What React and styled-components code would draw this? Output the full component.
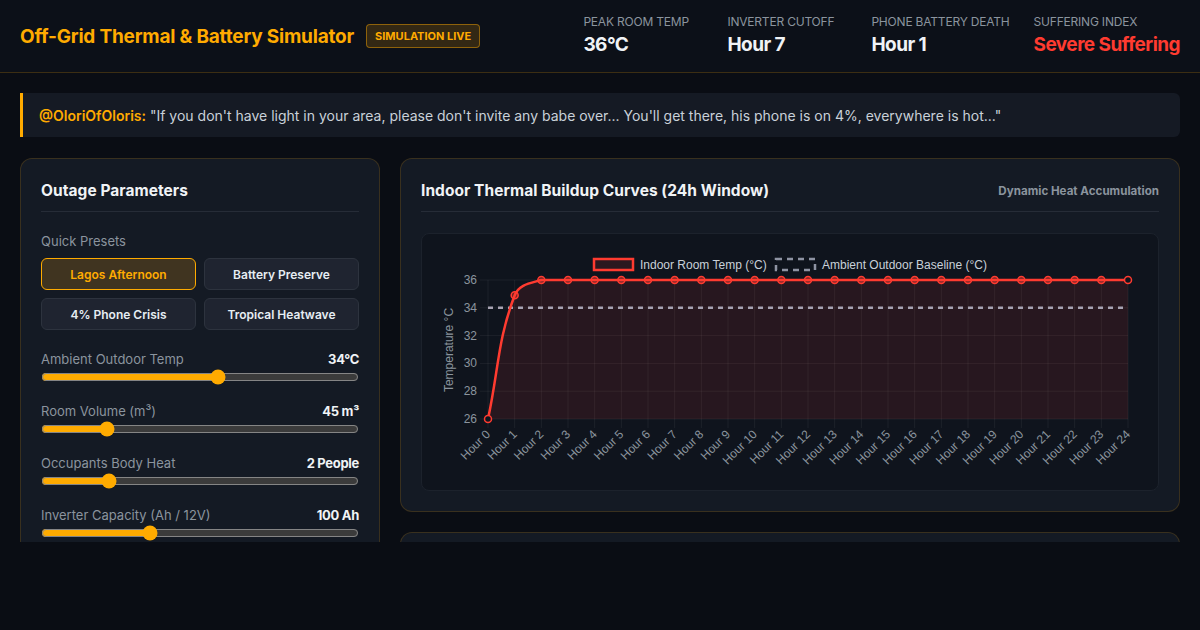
import React from 'react';
import styled, { createGlobalStyle } from 'styled-components';

const amber = '#ffab00';
const red = '#ff3b30';
const muted = '#8b949e';
const headFont = `'Inter', 'DejaVu Sans', sans-serif`;

const GlobalStyle = createGlobalStyle`
  html, body {
    margin: 0;
    padding: 0;
    background: #0a0d14;
    color: #e6edf3;
    font-family: 'Inter', 'Liberation Sans', sans-serif;
  }
  * { box-sizing: border-box; }
`;

const Header = styled.header`
  height: 73px;
  display: flex;
  align-items: center;
  justify-content: space-between;
  padding: 0 20px;
  background: #0c1018;
  border-bottom: 1px solid rgba(255, 171, 0, 0.2);
`;

const Brand = styled.div`
  display: flex;
  align-items: center;
  gap: 12px;
`;

const Title = styled.h1`
  margin: 0;
  font-family: ${headFont};
  font-size: 19px;
  font-weight: 700;
  letter-spacing: -0.2px;
  color: ${amber};
`;

const Badge = styled.span`
  display: inline-flex;
  align-items: center;
  height: 24px;
  padding: 0 8px;
  border-radius: 4px;
  border: 1px solid rgba(255, 171, 0, 0.45);
  background: rgba(255, 171, 0, 0.16);
  color: ${amber};
  font-size: 11px;
  font-weight: 700;
  text-transform: uppercase;
`;

const Stats = styled.div`
  display: flex;
  gap: 24px;
  padding-bottom: 3px;
`;

const Stat = styled.div`
  min-width: 120px;
  display: flex;
  flex-direction: column;
  gap: 4px;
`;

const StatLabel = styled.div`
  font-size: 12px;
  letter-spacing: -0.2px;
  color: ${muted};
  text-transform: uppercase;
`;

const StatValue = styled.div`
  font-family: ${headFont};
  font-size: 19px;
  font-weight: 700;
  letter-spacing: -0.55px;
  color: ${(p) => (p.$danger ? red : '#f0f3f6')};
`;

const Main = styled.main`
  height: 469px;
  overflow: hidden;
  padding: 20px 20px 0;
  display: flex;
  flex-direction: column;
  gap: 21px;
`;

const Quote = styled.blockquote`
  flex-shrink: 0;
  margin: 0;
  height: 44px;
  display: flex;
  align-items: center;
  padding: 0 16px;
  background: #151a24;
  border-left: 3px solid ${amber};
  border-radius: 0 6px 6px 0;
  font-size: 14px;
  color: #c9d1d9;
`;

const Handle = styled.strong`
  font-family: ${headFont};
  font-weight: 600;
  color: ${amber};
  margin-right: 4px;
`;

const Layout = styled.div`
  flex-shrink: 0;
  display: grid;
  grid-template-columns: 360px 1fr;
  gap: 20px;
  align-items: start;
`;

const Card = styled.section`
  background: #141a24;
  border: 1px solid rgba(255, 171, 0, 0.16);
  border-radius: 12px;
  padding: 20px;
  min-height: ${(p) => p.$minHeight || 0}px;
`;

const Column = styled.div`
  display: flex;
  flex-direction: column;
  gap: 20px;
`;

const CardHead = styled.div`
  display: flex;
  align-items: center;
  justify-content: space-between;
  height: 33px;
  padding-bottom: 9px;
  border-bottom: 1px solid #262c37;
  margin-bottom: 21px;
`;

const CardTitle = styled.h2`
  margin: 0;
  font-family: ${headFont};
  font-size: 15.5px;
  font-weight: 700;
  letter-spacing: 0.05px;
  color: #f0f3f6;
`;

const CardNote = styled.span`
  font-family: ${headFont};
  font-size: 11.6px;
  font-weight: 700;
  color: ${muted};
`;

const SubLabel = styled.div`
  font-size: 13px;
  color: ${muted};
  margin-bottom: 9px;
`;

const PresetGrid = styled.div`
  display: grid;
  grid-template-columns: 1fr 1fr;
  gap: 8px;
  margin-bottom: 21px;
`;

const Preset = styled.button`
  height: 32px;
  border-radius: 6px;
  font-family: 'Inter', sans-serif;
  font-size: 12px;
  font-weight: 600;
  cursor: pointer;
  border: 1px solid ${(p) => (p.$active ? amber : '#2d333e')};
  background: ${(p) => (p.$active ? '#403420' : '#1f2430')};
  color: ${(p) => (p.$active ? amber : '#e6edf3')};
`;

const Field = styled.div`
  margin-bottom: 18px;
`;

const FieldRow = styled.div`
  display: flex;
  justify-content: space-between;
  align-items: center;
  font-size: 13px;
  margin-bottom: 2px;
`;

const FieldName = styled.span`
  color: ${muted};
`;

const FieldValue = styled.span`
  font-family: ${headFont};
  font-weight: 700;
  letter-spacing: -0.3px;
  color: #f0f3f6;
`;

const Range = styled.input`
  display: block;
  width: 100%;
  margin: 0;
  height: 16px;
  accent-color: ${amber};
  color-scheme: dark;
`;

const ChartBox = styled.div`
  height: 258px;
  background: #0f141d;
  border: 1px solid #1c222c;
  border-radius: 8px;
  overflow: hidden;
`;

const presets = ['Lagos Afternoon', 'Battery Preserve', '4% Phone Crisis', 'Tropical Heatwave'];

const fields = [
  { name: 'Ambient Outdoor Temp', value: '34°C', min: 20, max: 45, v: 34 },
  { name: 'Room Volume (m³)', value: '45 m³', min: 20, max: 150, v: 45 },
  { name: 'Occupants Body Heat', value: '2 People', min: 1, max: 6, v: 2 },
  { name: 'Inverter Capacity (Ah / 12V)', value: '100 Ah', min: 50, max: 200, v: 100 },
];

const hours = Array.from({ length: 25 }, (_, i) => i);
const temps = hours.map((h) => (h === 0 ? 26 : h === 1 ? 34.9 : 36));

const X0 = 66;
const X1 = 706;
const xAt = (h) => X0 + ((X1 - X0) * h) / 24;
const yAt = (t) => 185 - ((t - 26) * (185 - 46)) / 10;

// spline through hour 0..2, flat after that
const curve = `M66,185 C76.7,135.5 75.5,106.1 92.7,61.3 C96.8,50.5 107.9,49.3 119.3,46 L706,46`;

const ThermalChart = () => {
  const axis = { fontFamily: 'Liberation Sans, Arial, sans-serif', fontSize: 12, fill: muted };
  return (
    <svg width="735" height="256" viewBox="0 0 735 256">
      <g>
        <rect x="172" y="25" width="39" height="11" fill="rgba(255,59,48,0.12)" stroke={red} strokeWidth="2.5" />
        <text x="218" y="35" {...axis} fill="#c9d1d9">Indoor Room Temp (°C)</text>
        <rect x="354" y="25" width="39" height="11" fill="none" stroke="#8e93a3" strokeWidth="2.5" strokeDasharray="6 5" />
        <text x="400" y="35" {...axis} fill="#c9d1d9">Ambient Outdoor Baseline (°C)</text>
      </g>
      {[26, 28, 30, 32, 34, 36].map((t) => (
        <g key={t}>
          <line x1="58" x2={X1} y1={yAt(t)} y2={yAt(t)} stroke="rgba(255,255,255,0.06)" />
          <text x="55" y={yAt(t) + 4} textAnchor="end" {...axis}>{t}</text>
        </g>
      ))}
      {hours.map((h) => (
        <g key={h}>
          <line x1={xAt(h)} x2={xAt(h)} y1="46" y2="194" stroke="rgba(255,255,255,0.06)" />
          <text
            x={xAt(h) + 3}
            y="201"
            textAnchor="end"
            transform={`rotate(-45 ${xAt(h) + 3} 201)`}
            {...axis}
          >
            Hour {h}
          </text>
        </g>
      ))}
      <text x="31" y="116" textAnchor="middle" transform="rotate(-90 31 116)" {...axis}>
        Temperature °C
      </text>
      <path d={`${curve} L706,185 L66,185 Z`} fill="rgba(255,59,48,0.1)" />
      <line x1={X0} x2={X1} y1={yAt(34)} y2={yAt(34)} stroke="#a7a3b3" strokeWidth="2.5" strokeDasharray="5 5" />
      <path d={curve} fill="none" stroke={red} strokeWidth="2.5" />
      {hours.map((h) => (
        <circle
          key={h}
          cx={xAt(h)}
          cy={yAt(temps[h])}
          r="3.5"
          fill={h === 0 || h === 24 ? '#0f141d' : 'rgba(255,59,48,0.4)'}
          stroke={red}
          strokeWidth="1.5"
        />
      ))}
    </svg>
  );
};

const App = () => (
  <>
    <GlobalStyle />
    <Header>
      <Brand>
        <Title>Off-Grid Thermal &amp; Battery Simulator</Title>
        <Badge>Simulation Live</Badge>
      </Brand>
      <Stats>
        <Stat>
          <StatLabel>Peak Room Temp</StatLabel>
          <StatValue>36°C</StatValue>
        </Stat>
        <Stat>
          <StatLabel>Inverter Cutoff</StatLabel>
          <StatValue>Hour 7</StatValue>
        </Stat>
        <Stat>
          <StatLabel>Phone Battery Death</StatLabel>
          <StatValue>Hour 1</StatValue>
        </Stat>
        <Stat>
          <StatLabel>Suffering Index</StatLabel>
          <StatValue $danger>Severe Suffering</StatValue>
        </Stat>
      </Stats>
    </Header>
    <Main>
      <Quote>
        <Handle>@OloriOfOloris:</Handle>
        "If you don't have light in your area, please don't invite any babe over... You'll get there, his phone is on 4%, everywhere is hot..."
      </Quote>
      <Layout>
        <Card>
          <CardHead>
            <CardTitle>Outage Parameters</CardTitle>
          </CardHead>
          <SubLabel>Quick Presets</SubLabel>
          <PresetGrid>
            {presets.map((p, i) => (
              <Preset key={p} $active={i === 0}>{p}</Preset>
            ))}
          </PresetGrid>
          {fields.map((f) => (
            <Field key={f.name}>
              <FieldRow>
                <FieldName>{f.name}</FieldName>
                <FieldValue>{f.value}</FieldValue>
              </FieldRow>
              <Range type="range" min={f.min} max={f.max} defaultValue={f.v} />
            </Field>
          ))}
        </Card>
        <Column>
          <Card>
            <CardHead>
              <CardTitle>Indoor Thermal Buildup Curves (24h Window)</CardTitle>
              <CardNote>Dynamic Heat Accumulation</CardNote>
            </CardHead>
            <ChartBox>
              <ThermalChart />
            </ChartBox>
          </Card>
          <Card $minHeight={200} />
        </Column>
      </Layout>
    </Main>
  </>
);

export default App;
